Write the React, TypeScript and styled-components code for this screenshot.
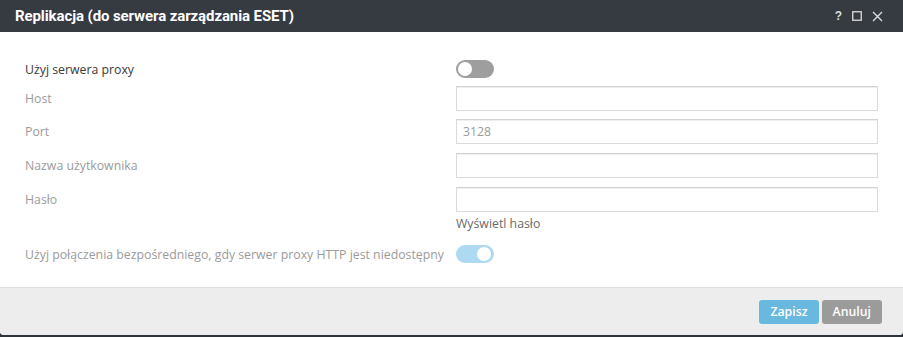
import styled, { createGlobalStyle } from "styled-components";

const GlobalStyle = createGlobalStyle`
  html, body {
    margin: 0;
    padding: 0;
    background: #2f343b;
  }
  body {
    font-family: "Open Sans", "Noto Sans", sans-serif;
  }
`;

const Dialog = styled.main`
  width: 903px;
  height: 335px;
  display: flex;
  flex-direction: column;
  background: #ffffff;
  border-radius: 0 0 4px 4px;
  overflow: hidden;
`;

const Header = styled.header`
  height: 32px;
  flex: none;
  background: #363a41;
  display: flex;
  align-items: center;
  justify-content: space-between;
  padding: 0 20px 0 15px;
  box-sizing: border-box;
`;

const Title = styled.h1`
  margin: 0;
  color: #ffffff;
  font-family: Roboto, "Liberation Sans", sans-serif;
  font-weight: 700;
  font-size: 15px;
  letter-spacing: -0.1px;
`;

const HeaderTools = styled.div`
  display: flex;
  align-items: center;
  gap: 10px;
  color: #dcdcdc;
`;

const Help = styled.span`
  font-family: "Liberation Sans", sans-serif;
  font-weight: 700;
  font-size: 12px;
  line-height: 1;
`;

const Body = styled.section`
  flex: 1;
  padding: 28px 25px 0 25px;
  display: grid;
  grid-template-columns: 431px 422px;
  align-content: start;
  align-items: center;
`;

const Label = styled.div<{ $tone?: "dark" | "light" }>`
  font-size: 12.3px;
  color: ${({ $tone }) => ($tone === "dark" ? "#3a3a3a" : "#9b9b9b")};
  white-space: nowrap;
`;

const Cell = styled.div<{ $mt?: number }>`
  margin-top: ${({ $mt }) => $mt ?? 0}px;
  display: flex;
  align-items: center;
  min-height: 18px;
`;

const TextInput = styled.input`
  width: 100%;
  height: 25px;
  box-sizing: border-box;
  border: 1px solid #dadada;
  border-top-color: #d2d2d2;
  box-shadow: inset 0 1px 0 #efefef;
  padding: 0 6px;
  font-family: "Open Sans", sans-serif;
  font-size: 12.3px;
  color: #9b9b9b;
  outline: none;
  background: #fff;
`;

const Toggle = styled.div<{ $on?: boolean }>`
  width: 38px;
  height: 18px;
  border-radius: 9px;
  background: ${({ $on }) => ($on ? "#addaf1" : "#9e9e9e")};
  position: relative;
  &::after {
    content: "";
    position: absolute;
    top: 2px;
    ${({ $on }) => ($on ? "right: 3px;" : "left: 2px;")}
    width: 14px;
    height: 14px;
    border-radius: 50%;
    background: #ffffff;
  }
`;

const Hint = styled.div`
  font-size: 12.3px;
  color: #6a6a6a;
`;

const Footer = styled.footer`
  height: 48px;
  flex: none;
  background: #ededed;
  border-top: 1px solid #dedede;
  box-sizing: border-box;
  display: flex;
  align-items: center;
  justify-content: flex-end;
  gap: 3px;
  padding: 0 21px 0 0;
`;

const Button = styled.button<{ $primary?: boolean }>`
  height: 24px;
  padding: 0 11px;
  border: none;
  border-radius: 3px;
  background: ${({ $primary }) => ($primary ? "#69b8e0" : "#9b9b9b")};
  color: #ffffff;
  font-family: "Open Sans", sans-serif;
  font-weight: 600;
  font-size: 12.3px;
  cursor: pointer;
`;

const fields = [
  { label: "Host", value: "", mt: 8 },
  { label: "Port", value: "3128", mt: 8 },
  { label: "Nazwa użytkownika", value: "", mt: 9 },
  { label: "Hasło", value: "", mt: 9 },
];

export default function App() {
  return (
    <>
      <GlobalStyle />
      <Dialog>
        <Header>
          <Title>Replikacja (do serwera zarządzania ESET)</Title>
          <HeaderTools>
            <Help>?</Help>
            <svg width="10" height="10" viewBox="0 0 10 10">
              <rect x="0.75" y="0.75" width="8.5" height="8.5" fill="none" stroke="currentColor" strokeWidth="1.3" />
            </svg>
            <svg width="11" height="11" viewBox="0 0 11 11">
              <path d="M1 1 L10 10 M10 1 L1 10" stroke="currentColor" strokeWidth="1.4" />
            </svg>
          </HeaderTools>
        </Header>

        <Body>
          <Cell>
            <Label $tone="dark">Użyj serwera proxy</Label>
          </Cell>
          <Cell>
            <Toggle />
          </Cell>

          {fields.map((f) => (
            <>
              <Cell key={f.label + "l"} $mt={f.mt}>
                <Label>{f.label}</Label>
              </Cell>
              <Cell key={f.label + "i"} $mt={f.mt}>
                <TextInput
                  type={f.label === "Hasło" ? "password" : "text"}
                  defaultValue={f.value}
                />
              </Cell>
            </>
          ))}

          <Cell $mt={2} />
          <Cell $mt={2}>
            <Hint>Wyświetl hasło</Hint>
          </Cell>

          <Cell $mt={13}>
            <Label>Użyj połączenia bezpośredniego, gdy serwer proxy HTTP jest niedostępny</Label>
          </Cell>
          <Cell $mt={13}>
            <Toggle $on />
          </Cell>
        </Body>

        <Footer>
          <Button $primary>Zapisz</Button>
          <Button>Anuluj</Button>
        </Footer>
      </Dialog>
    </>
  );
}
